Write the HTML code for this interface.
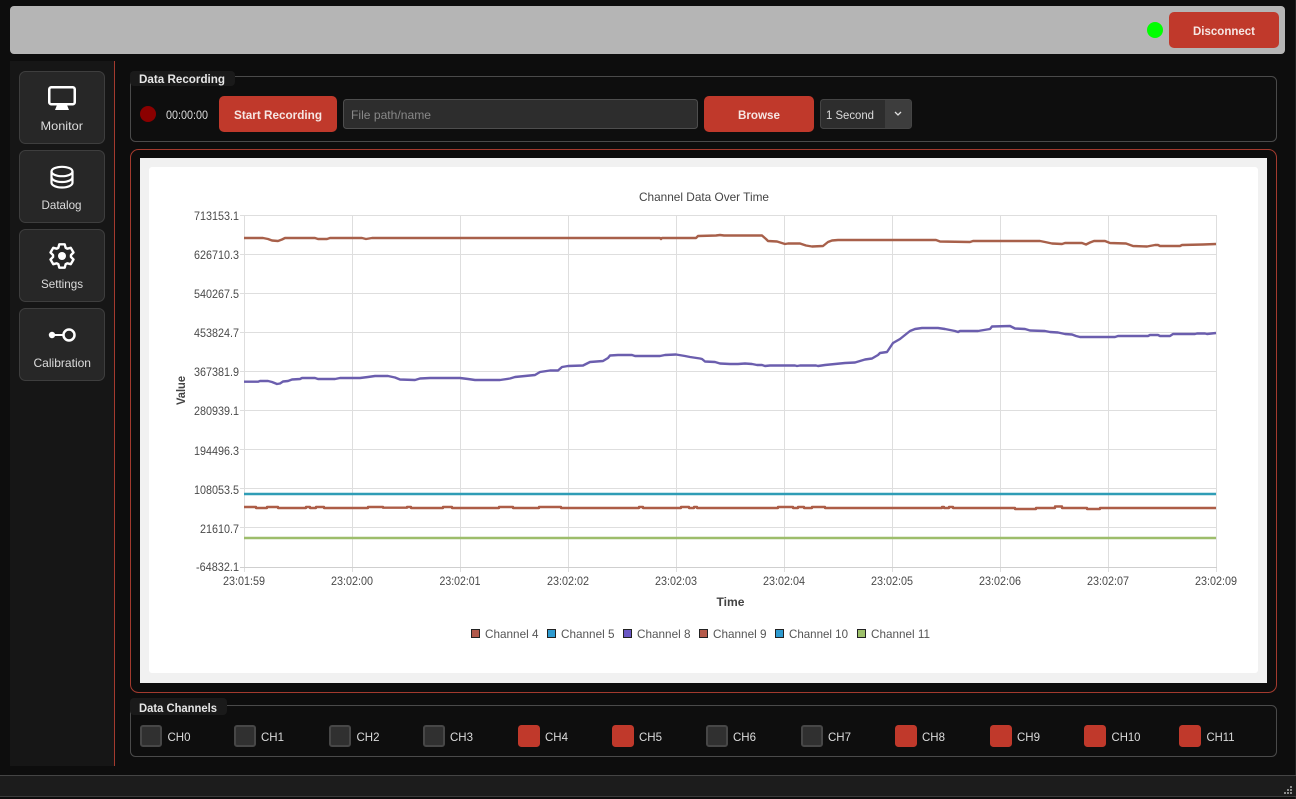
<!DOCTYPE html>
<html><head><meta charset="utf-8"><title>Data Monitor</title>
<style>
html,body{margin:0;padding:0;background:#0d0d0d;width:1296px;height:799px;overflow:hidden}
svg{display:block;filter:blur(.3px)}
text{font-family:"Liberation Sans",sans-serif;font-size:12px}
.ui{fill:#dcdcdc}
.btn{fill:#f6e6e3;font-weight:bold}
.ttl{fill:#e6e6e6;font-weight:bold}
.ax{fill:#4a4a4a}
.lg{fill:#555}
.ck{stroke:#474747;stroke-width:2;fill:#303030}
.on{fill:#c0392b;stroke:#c0392b;stroke-width:1}
</style></head><body>
<svg width="1296" height="799" viewBox="0 0 1296 799" xmlns="http://www.w3.org/2000/svg">
<rect width="1296" height="799" fill="#0d0d0d"/>
<rect x="1295" y="0" width="1" height="799" fill="#222"/>

<!-- top bar -->
<rect x="10" y="6" width="1275" height="48" rx="4" fill="#b5b5b5"/>
<circle cx="1155" cy="30" r="8" fill="#00ff00"/>
<rect x="1169" y="12" width="110" height="36" rx="5" fill="#c0392b"/>
<text class="btn" x="1193" y="35" textLength="62" lengthAdjust="spacingAndGlyphs">Disconnect</text>

<!-- sidebar -->
<rect x="10" y="61" width="104" height="705" fill="#161616"/>
<rect x="114" y="61" width="1" height="705" fill="#a33a2e"/>
<g fill="#272727" stroke="#3e3e3e">
<rect x="19.5" y="71.5" width="85" height="72" rx="6"/>
<rect x="19.5" y="150.5" width="85" height="72" rx="6"/>
<rect x="19.5" y="229.5" width="85" height="72" rx="6"/>
<rect x="19.5" y="308.5" width="85" height="72" rx="6"/>
</g>
<!-- monitor -->
<rect x="49.25" y="87.25" width="25.5" height="17" rx="2" fill="none" stroke="#fff" stroke-width="2.5"/>
<polygon points="57,105 67,105 69,110 55,110" fill="#fff"/>
<!-- database -->
<g fill="none" stroke="#fff" stroke-width="2.2">
<ellipse cx="62" cy="171.5" rx="10.5" ry="4.7"/>
<path d="M51.5 171.5v11c0 3 4.7 5 10.5 5s10.500-2 10.500-5v-11"/>
<path d="M51.500 177c0 3 4.700 5 10.500 5s10.500-2 10.500-5"/>
</g>
<!-- gear -->
<g transform="translate(62 256)">
<polygon fill="none" stroke="#fff" stroke-width="2.4" stroke-linejoin="round" points="-3.66,-8.22 -2.7,-11.69 2.7,-11.69 3.66,-8.22 5.29,-7.28 8.78,-8.18 11.48,-3.51 8.95,-0.94 8.95,0.94 11.48,3.51 8.78,8.18 5.29,7.28 3.66,8.22 2.7,11.69 -2.7,11.69 -3.66,8.22 -5.29,7.28 -8.78,8.18 -11.48,3.51 -8.95,0.94 -8.95,-0.94 -11.48,-3.51 -8.78,-8.18 -5.29,-7.28"/>
<circle r="4" fill="#fff"/>
</g>
<!-- calibration -->
<circle cx="52" cy="335" r="3.2" fill="#fff"/>
<rect x="52" y="334" width="11" height="2" fill="#fff"/>
<circle cx="69" cy="335" r="5.5" fill="none" stroke="#fff" stroke-width="2.5"/>
<text class="ui" x="40.5" y="130" textLength="42.5" lengthAdjust="spacingAndGlyphs">Monitor</text>
<text class="ui" x="41.5" y="209" textLength="40" lengthAdjust="spacingAndGlyphs">Datalog</text>
<text class="ui" x="41" y="288" textLength="42" lengthAdjust="spacingAndGlyphs">Settings</text>
<text class="ui" x="33.5" y="367" textLength="57.5" lengthAdjust="spacingAndGlyphs">Calibration</text>

<!-- data recording -->
<rect x="130.5" y="76.5" width="1146" height="65" rx="5" fill="#0e0e0e" stroke="#4a4a4a"/>
<rect x="130" y="71" width="105" height="15" rx="4" fill="#1a1a1a"/>
<text class="ttl" x="139" y="83" textLength="86" lengthAdjust="spacingAndGlyphs">Data Recording</text>
<circle cx="148" cy="114" r="8" fill="#8b0000"/>
<text class="ui" x="166" y="119" textLength="42" lengthAdjust="spacingAndGlyphs">00:00:00</text>
<rect x="219" y="96" width="118" height="36" rx="5" fill="#c0392b"/>
<text class="btn" x="234" y="119" textLength="88" lengthAdjust="spacingAndGlyphs">Start Recording</text>
<rect x="343.5" y="99.5" width="354" height="29" rx="3" fill="#2d2d2d" stroke="#4e4e4e"/>
<text x="351" y="119" fill="#888" textLength="80" lengthAdjust="spacingAndGlyphs">File path/name</text>
<rect x="704" y="96" width="110" height="36" rx="5" fill="#c0392b"/>
<text class="btn" x="738" y="119" textLength="42" lengthAdjust="spacingAndGlyphs">Browse</text>
<rect x="820.5" y="99.5" width="91" height="29" rx="3" fill="#2d2d2d" stroke="#454545"/>
<path d="M885 100h24a2 2 0 0 1 2 2v24a2 2 0 0 1-2 2h-24z" fill="#3d3d3d"/>
<text class="ui" x="826" y="119" textLength="48" lengthAdjust="spacingAndGlyphs">1 Second</text>
<path d="M895 112l3 3 3-3" fill="none" stroke="#e0e0e0" stroke-width="1.3"/>

<!-- chart frame -->
<rect x="130.5" y="149.5" width="1146" height="543" rx="8" fill="#0d0d0d" stroke="#a33a2e"/>
<rect x="140" y="158" width="1127" height="525" fill="#f1f1f1"/>
<rect x="149" y="167" width="1109" height="506" rx="3" fill="#fff"/>

<text x="639" y="201" fill="#444" textLength="130" lengthAdjust="spacingAndGlyphs">Channel Data Over Time</text>

<!-- grid -->
<g stroke="#dedede" stroke-width="1" fill="none" shape-rendering="crispEdges">
<path d="M240 215.5H1217M240 254.5H1217M240 293.500H1217M240 332.5H1217M240 371.5H1217M240 410.5H1217M240 449.5H1217M240 488.5H1217M240 527.5H1217"/>
<path d="M244.5 216V572M352.5 216V572M460.5 216V572M568.5 216V572M676.5 216V572M784.5 216V572M892.5 216V572M1000.5 216V572M1108.5 216V572M1216.5 216V572"/>
<path stroke="#cfcfcf" d="M240 567.5H1217"/>
</g>

<!-- y labels -->
<g class="ax" text-anchor="end">
<text x="239" y="220" textLength="45" lengthAdjust="spacingAndGlyphs">713153.1</text>
<text x="239" y="259" textLength="45" lengthAdjust="spacingAndGlyphs">626710.3</text>
<text x="239" y="298" textLength="45" lengthAdjust="spacingAndGlyphs">540267.5</text>
<text x="239" y="337" textLength="45" lengthAdjust="spacingAndGlyphs">453824.7</text>
<text x="239" y="376" textLength="45" lengthAdjust="spacingAndGlyphs">367381.9</text>
<text x="239" y="415" textLength="45" lengthAdjust="spacingAndGlyphs">280939.1</text>
<text x="239" y="455" textLength="45" lengthAdjust="spacingAndGlyphs">194496.3</text>
<text x="239" y="494" textLength="45" lengthAdjust="spacingAndGlyphs">108053.5</text>
<text x="239" y="533" textLength="39" lengthAdjust="spacingAndGlyphs">21610.7</text>
<text x="239" y="571" textLength="43" lengthAdjust="spacingAndGlyphs">-64832.1</text>
</g>
<!-- x labels -->
<g class="ax" text-anchor="middle">
<text x="244" y="585" textLength="42" lengthAdjust="spacingAndGlyphs">23:01:59</text>
<text x="352" y="585" textLength="42" lengthAdjust="spacingAndGlyphs">23:02:00</text>
<text x="460" y="585" textLength="41" lengthAdjust="spacingAndGlyphs">23:02:01</text>
<text x="568" y="585" textLength="42" lengthAdjust="spacingAndGlyphs">23:02:02</text>
<text x="676" y="585" textLength="42" lengthAdjust="spacingAndGlyphs">23:02:03</text>
<text x="784" y="585" textLength="42" lengthAdjust="spacingAndGlyphs">23:02:04</text>
<text x="892" y="585" textLength="42" lengthAdjust="spacingAndGlyphs">23:02:05</text>
<text x="1000" y="585" textLength="42" lengthAdjust="spacingAndGlyphs">23:02:06</text>
<text x="1108" y="585" textLength="42" lengthAdjust="spacingAndGlyphs">23:02:07</text>
<text x="1216" y="585" textLength="42" lengthAdjust="spacingAndGlyphs">23:02:09</text>
</g>
<text x="716.5" y="606" fill="#444" style="font-weight:bold" textLength="28" lengthAdjust="spacingAndGlyphs">Time</text>
<text transform="translate(185 405) rotate(-90)" fill="#444" style="font-weight:bold" textLength="29" lengthAdjust="spacingAndGlyphs">Value</text>

<!-- series -->
<g fill="none" stroke-width="2.4" stroke-linejoin="round">
<polyline stroke="#a8604a" points="244,238 263,238 268,239 272,240.5 278,241 282,239.5 285,238 315,238 318,239 327,239 330,238 362,238 366,239 369,238.5 372,238 660,238 661,239 662,238 696,238 698,236 716,235.5 720,235 724,235.5 762,235.5 766,239 768,241 777,241.5 785,244 788,243.5 800,243.5 806,245.5 812,246.5 823,246 828,242 832,240.5 838,240 936,240 940,241.5 970,242 973,241 1040,241 1045,242 1052,243.5 1062,244 1065,243 1082,243 1086,244.5 1090,242.5 1094,241 1105,241 1110,243 1126,243.5 1133,246 1147,246.5 1155,245 1158,245 1160,246 1180,246 1182,245 1203,244.5 1216,244"/>
<polyline stroke="#6b5eae" points="244,381.7 258,381.7 260,381 268,381 272,382 277,384 280,383.5 283,381.5 288,381 292,379.5 300,379 302,378 315,378 318,379 335,379 340,378 360,378 368,377 375,376 388,376 395,377.5 400,379.5 415,380 420,378.5 430,378 460,378 468,379 475,380 500,380 510,378.5 515,377 525,376 535,375 540,372 550,370.5 558,370.5 562,367 568,366 583,365.5 590,362 603,361 608,358 610,355.5 618,355 632,355 635,356 660,356 665,355 676,354.5 685,356 690,357 700,358.5 702,359 705,361.5 715,362 720,363.5 730,364 738,364 745,363.5 752,364 757,365 762,365 765,366 770,365.5 795,365.5 797,366 800,365.5 816,365.5 818,366 825,365 835,364 845,363 855,362.5 860,361 865,359.5 872,358.5 878,355 880,353 887,352 893,343 900,339 905,335 910,331 915,329 922,328 938,328 945,329 955,331 958,332 960,331 978,331 990,329 992,326.5 1010,326 1012,327 1015,328.5 1025,329 1030,330.5 1045,331 1050,332 1058,332.5 1065,334 1072,334.5 1076,336 1080,337 1115,337 1118,336 1148,336 1150,335 1158,335 1160,336 1170,336 1173,334 1195,334 1197,333.5 1205,333.5 1207,334 1216,333"/>
<path stroke="#2f9db6" d="M244 494H1216"/>
<path stroke="#ad5d47" d="M244 507H256V508H267V507H278V508H306V507H310V508H316V507H324V508H368V507H383V507.7H407V507H411V508H443V507H452V508H499V507H513V508H539V507H561V508H639V507H643V508H681V507H689V508H694V507H697V508H778V507H793V508H798V507H804V508H812V507H825V508H942V507H944V508H949V507H953V508H1015V509H1036V508H1055V506.5H1062V508H1087V509H1100V508H1216"/>
<path stroke="#9dbd6b" d="M244 538H1216"/>
</g>

<!-- legend -->
<g stroke="#222" stroke-width="1">
<rect x="471.5" y="629.5" width="8" height="8" fill="#b0584a"/>
<rect x="547.5" y="629.5" width="8" height="8" fill="#2e9bd0"/>
<rect x="623.5" y="629.5" width="8" height="8" fill="#6a57c4"/>
<rect x="699.5" y="629.5" width="8" height="8" fill="#b55a4a"/>
<rect x="775.5" y="629.5" width="8" height="8" fill="#2e9bd0"/>
<rect x="857.5" y="629.5" width="8" height="8" fill="#9dc06a"/>
</g>
<g class="lg">
<text x="485" y="638" textLength="53.5" lengthAdjust="spacingAndGlyphs">Channel 4</text>
<text x="561" y="638" textLength="53.5" lengthAdjust="spacingAndGlyphs">Channel 5</text>
<text x="637" y="638" textLength="53.5" lengthAdjust="spacingAndGlyphs">Channel 8</text>
<text x="713" y="638" textLength="53.5" lengthAdjust="spacingAndGlyphs">Channel 9</text>
<text x="789" y="638" textLength="59" lengthAdjust="spacingAndGlyphs">Channel 10</text>
<text x="871" y="638" textLength="59" lengthAdjust="spacingAndGlyphs">Channel 11</text>
</g>

<!-- data channels -->
<rect x="130.5" y="705.5" width="1146" height="51" rx="5" fill="#0e0e0e" stroke="#4a4a4a"/>
<rect x="130" y="698" width="97" height="17" rx="4" fill="#1a1a1a"/>
<text class="ttl" x="139" y="712" textLength="78" lengthAdjust="spacingAndGlyphs">Data Channels</text>
<rect class="ck" x="141" y="726" width="20" height="20" rx="2"/>
<rect class="ck" x="235" y="726" width="20" height="20" rx="2"/>
<rect class="ck" x="330" y="726" width="20" height="20" rx="2"/>
<rect class="ck" x="424" y="726" width="20" height="20" rx="2"/>
<rect class="on" x="518.5" y="725.5" width="21" height="21" rx="3"/>
<rect class="on" x="612.5" y="725.5" width="21" height="21" rx="3"/>
<rect class="ck" x="707" y="726" width="20" height="20" rx="2"/>
<rect class="ck" x="802" y="726" width="20" height="20" rx="2"/>
<rect class="on" x="895.5" y="725.5" width="21" height="21" rx="3"/>
<rect class="on" x="990.5" y="725.5" width="21" height="21" rx="3"/>
<rect class="on" x="1084.5" y="725.5" width="21" height="21" rx="3"/>
<rect class="on" x="1179.5" y="725.5" width="21" height="21" rx="3"/>
<g class="ui">
<text x="167.5" y="741" textLength="23" lengthAdjust="spacingAndGlyphs">CH0</text>
<text x="261" y="741" textLength="23" lengthAdjust="spacingAndGlyphs">CH1</text>
<text x="356.5" y="741" textLength="23" lengthAdjust="spacingAndGlyphs">CH2</text>
<text x="450" y="741" textLength="23" lengthAdjust="spacingAndGlyphs">CH3</text>
<text x="545" y="741" textLength="23" lengthAdjust="spacingAndGlyphs">CH4</text>
<text x="639" y="741" textLength="23" lengthAdjust="spacingAndGlyphs">CH5</text>
<text x="733" y="741" textLength="23" lengthAdjust="spacingAndGlyphs">CH6</text>
<text x="828" y="741" textLength="23" lengthAdjust="spacingAndGlyphs">CH7</text>
<text x="922" y="741" textLength="23" lengthAdjust="spacingAndGlyphs">CH8</text>
<text x="1017" y="741" textLength="23" lengthAdjust="spacingAndGlyphs">CH9</text>
<text x="1111.5" y="741" textLength="29" lengthAdjust="spacingAndGlyphs">CH10</text>
<text x="1206.5" y="741" textLength="28" lengthAdjust="spacingAndGlyphs">CH11</text>
</g>

<!-- status bar -->
<rect x="0" y="775" width="1296" height="22" fill="#1c1c1c"/>
<rect x="0" y="775" width="1296" height="1" fill="#444"/>
<rect x="0" y="796" width="1296" height="1" fill="#3c3c3c"/>
<g fill="#8a8a8a">
<rect x="1290" y="786" width="2" height="2"/>
<rect x="1287" y="789" width="2" height="2"/><rect x="1290" y="789" width="2" height="2"/>
<rect x="1284" y="792" width="2" height="2"/><rect x="1287" y="792" width="2" height="2"/><rect x="1290" y="792" width="2" height="2"/>
</g>
</svg>
</body></html>
